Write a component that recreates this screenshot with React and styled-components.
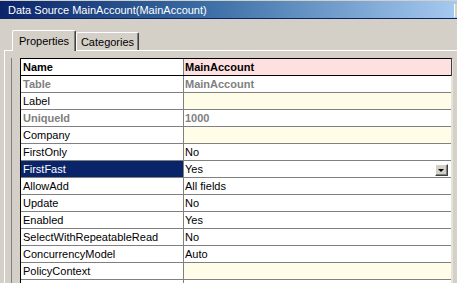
import React from "react";
import styled, { createGlobalStyle, css } from "styled-components";

const GlobalStyle = createGlobalStyle`
  html, body {
    margin: 0;
    padding: 0;
    background: #d4d0c8;
    overflow: hidden;
  }
  * { box-sizing: border-box; }
  body {
    font-family: "Liberation Sans", Arial, sans-serif;
    font-size: 11px;
  }
`;

const Window = styled.div`
  width: 457px;
  height: 283px;
  overflow: hidden;
  padding-top: 1px;
  background: #d4d0c8;
  display: flex;
  flex-direction: column;
`;

const TitleBar = styled.div`
  height: 18px;
  flex: none;
  display: flex;
  align-items: center;
  padding-left: 8px;
  color: #ffffff;
  font-size: 11px;
  background: linear-gradient(to right, #0a246a 0%, #3a6ea5 45%, #a6caf0 100%);
  border-bottom: 1px solid #0a246a;
`;

const TitleText = styled.span`
  flex: 1;
  white-space: nowrap;
`;

const TitleEdge = styled.span`
  width: 3px;
  height: 13px;
  border-left: 1px solid #ffffff;
  background: #d4d0c8;
  margin-top: 1px;
`;

const Body = styled.div`
  flex: 1;
  display: flex;
  flex-direction: column;
  padding-top: 11px;
`;

const TabStrip = styled.div`
  display: flex;
  align-items: flex-end;
  height: 20px;
  padding-left: 12px;
  flex: none;
`;

const Tab = styled.div`
  display: flex;
  align-items: center;
  justify-content: center;
  background: #d4d0c8;
  color: #000;
  font-size: 11px;
  border-top: 1px solid #ffffff;
  border-left: 1px solid #ffffff;
  border-right: 1px solid #404040;
  box-shadow: inset -1px 0 0 #808080;
  border-radius: 2px 2px 0 0;
  ${(p) =>
    p.$active
      ? css`
          width: 64px;
          height: 21px;
          margin-bottom: -1px;
          padding-bottom: 1px;
          position: relative;
          z-index: 1;
        `
      : css`
          width: 63px;
          height: 18px;
          padding-top: 1px;
        `}
`;

const Panel = styled.div`
  flex: 1;
  margin-left: 4px;
  border-top: 1px solid #ffffff;
  border-left: 1px solid #ffffff;
  padding: 7px 0 0 6px;
  display: flex;
`;

const ListFrame = styled.div`
  flex: 1;
  border-left: 1px solid #808080;
  padding-left: 8px;
  display: flex;
  align-items: flex-start;
`;

const Grid = styled.div`
  width: 433px;
  border-left: 1px solid #000000;
  border-top: 1px solid #000000;
  border-right: 2px solid #e6e3dc;
  background: #ffffff;
`;

const Row = styled.div`
  display: grid;
  grid-template-columns: 163px 1fr;
  height: 17px;
  border-bottom: 1px solid ${(p) => (p.$header ? "#000000" : "#808080")};
  ${(p) => p.$header && css`box-shadow: 1px 0 0 #404040;`}
`;

const NameCell = styled.div`
  display: flex;
  align-items: center;
  padding-left: 2px;
  border-right: 1px solid #808080;
  white-space: nowrap;
  overflow: hidden;
  font-weight: ${(p) => (p.$bold ? 700 : 400)};
  color: ${(p) => (p.$selected ? "#ffffff" : p.$muted ? "#808080" : "#000000")};
  background: ${(p) => (p.$selected ? "#0a246a" : "#ffffff")};
`;

const bgs = {
  pink: "#ffe0e0",
  yellow: "#fffde8",
  white: "#ffffff",
};

const ValueCell = styled.div`
  display: flex;
  align-items: center;
  justify-content: space-between;
  padding-left: 1px;
  white-space: nowrap;
  overflow: hidden;
  font-weight: ${(p) => (p.$bold ? 700 : 400)};
  color: ${(p) => (p.$muted ? "#808080" : "#000000")};
  background: ${(p) => bgs[p.$bg || "white"]};
`;

const DropButton = styled.span`
  width: 13px;
  height: 12px;
  margin-right: 3px;
  margin-top: 2px;
  background: #d4d0c8;
  border-top: 1px solid #ffffff;
  border-left: 1px solid #ffffff;
  border-right: 1px solid #404040;
  border-bottom: 1px solid #404040;
  box-shadow: inset -1px -1px 0 #808080;
  display: flex;
  align-items: center;
  justify-content: center;
  padding-right: 1px;
  padding-bottom: 1px;
`;

const Arrow = styled.span`
  width: 0;
  height: 0;
  border-left: 3px solid transparent;
  border-right: 3px solid transparent;
  border-top: 3px solid #000000;
  margin-top: 1px;
`;

const rows = [
  { name: "Name", value: "MainAccount", header: true, bold: true, bg: "pink" },
  { name: "Table", value: "MainAccount", bold: true, muted: true },
  { name: "Label", value: "", bg: "yellow" },
  { name: "UniqueId", value: "1000", bold: true, muted: true },
  { name: "Company", value: "", bg: "yellow" },
  { name: "FirstOnly", value: "No" },
  { name: "FirstFast", value: "Yes", selected: true },
  { name: "AllowAdd", value: "All fields" },
  { name: "Update", value: "No" },
  { name: "Enabled", value: "Yes" },
  { name: "SelectWithRepeatableRead", value: "No" },
  { name: "ConcurrencyModel", value: "Auto" },
  { name: "PolicyContext", value: "", bg: "yellow" },
  { name: "", value: "" },
];

export default function App() {
  return (
    <>
      <GlobalStyle />
      <Window>
        <TitleBar>
          <TitleText>Data Source MainAccount(MainAccount)</TitleText>
          <TitleEdge />
        </TitleBar>
        <Body>
          <TabStrip>
            <Tab $active>Properties</Tab>
            <Tab>Categories</Tab>
          </TabStrip>
          <Panel>
            <ListFrame>
              <Grid>
                {rows.map((r, i) => (
                  <Row key={i} $header={r.header}>
                    <NameCell
                      $bold={r.bold}
                      $muted={r.muted}
                      $selected={r.selected}
                    >
                      {r.name}
                    </NameCell>
                    <ValueCell $bold={r.bold} $muted={r.muted} $bg={r.bg}>
                      <span>{r.value}</span>
                      {r.selected && (
                        <DropButton>
                          <Arrow />
                        </DropButton>
                      )}
                    </ValueCell>
                  </Row>
                ))}
              </Grid>
            </ListFrame>
          </Panel>
        </Body>
      </Window>
    </>
  );
}
